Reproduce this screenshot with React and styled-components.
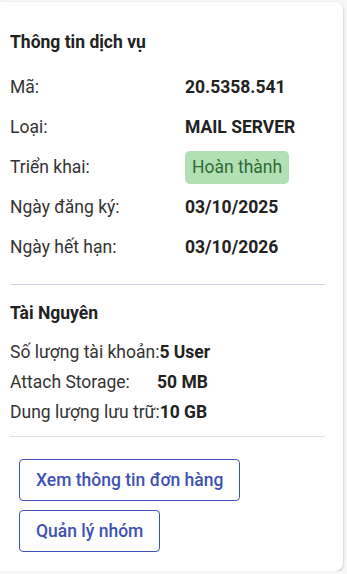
import styled, { createGlobalStyle } from 'styled-components';

const GlobalStyle = createGlobalStyle`
    body {
        margin: 0;
        background: #f7f7f7;
        font-family: Roboto, "Noto Sans", sans-serif;
    }
`;

const Card = styled.section`
    box-sizing: border-box;
    margin: 2px 0 0 -8px;
    width: 351px;
    padding: 28px 18px 19px 18px;
    background: #fff;
    border-radius: 8px;
    box-shadow: 0 1px 3px rgba(0, 0, 0, 0.25);
    display: flex;
    flex-direction: column;
`;

const Title = styled.h3`
    margin: 0;
    font-size: 17.5px;
    line-height: 24px;
    font-weight: 700;
    color: #222;
`;

const InfoList = styled.div`
    display: flex;
    flex-direction: column;
    margin-top: ${({ $gap }) => $gap}px;
`;

const InfoRow = styled.div`
    display: flex;
    align-items: center;
    height: ${({ $height }) => $height}px;
    font-size: 17.5px;
`;

const Label = styled.span`
    flex: none;
    width: ${({ $width }) => ($width ? `${$width}px` : 'auto')};
    min-width: ${({ $min }) => ($min ? `${$min}px` : '0')};
    color: #333;
`;

const Value = styled.span`
    font-weight: 700;
    color: #222;
`;

const Badge = styled.span`
    padding: 4px 7px;
    line-height: 25px;
    border-radius: 5px;
    background: #b3dfb5;
    color: #2e6b32;
    font-weight: 400;
`;

const Divider = styled.hr`
    margin: ${({ $top }) => $top}px 0 ${({ $bottom }) => $bottom}px;
    border: none;
    border-top: 1px solid ${({ $color }) => $color};
    height: 0;
`;

const Actions = styled.div`
    display: flex;
    flex-direction: column;
    align-items: flex-start;
    gap: 9px;
    padding-left: 9px;
`;

const OutlineButton = styled.button`
    height: 42px;
    padding: 0 16px;
    background: #fff;
    border: 1px solid #3f51b5;
    border-radius: 4px;
    color: #3f51b5;
    font-family: Roboto, sans-serif;
    font-size: 17.5px;
    font-weight: 500;
    cursor: pointer;
`;

const service = [
    { label: 'Mã:', value: '20.5358.541' },
    { label: 'Loại:', value: 'MAIL SERVER' },
    { label: 'Triển khai:', value: 'Hoàn thành', badge: true },
    { label: 'Ngày đăng ký:', value: '03/10/2025' },
    { label: 'Ngày hết hạn:', value: '03/10/2026' },
];

const resources = [
    { label: 'Số lượng tài khoản:', value: '5 User' },
    { label: 'Attach Storage:', value: '50 MB' },
    { label: 'Dung lượng lưu trữ:', value: '10 GB' },
];

export default function App() {
    return (
        <>
            <GlobalStyle />
            <Card>
                <Title>Thông tin dịch vụ</Title>
                <InfoList $gap={13}>
                    {service.map((row) => (
                        <InfoRow key={row.label} $height={40}>
                            <Label $width={175}>{row.label}</Label>
                            {row.badge ? <Badge>{row.value}</Badge> : <Value>{row.value}</Value>}
                        </InfoRow>
                    ))}
                </InfoList>
                <Divider $top={17} $bottom={16} $color="#c9d3e2" />
                <Title>Tài Nguyên</Title>
                <InfoList $gap={12}>
                    {resources.map((row) => (
                        <InfoRow key={row.label} $height={30}>
                            <Label $min={147}>{row.label}</Label>
                            <Value>{row.value}</Value>
                        </InfoRow>
                    ))}
                </InfoList>
                <Divider $top={9} $bottom={22} $color="#e0e0e0" />
                <Actions>
                    <OutlineButton>Xem thông tin đơn hàng</OutlineButton>
                    <OutlineButton>Quản lý nhóm</OutlineButton>
                </Actions>
            </Card>
        </>
    );
}
